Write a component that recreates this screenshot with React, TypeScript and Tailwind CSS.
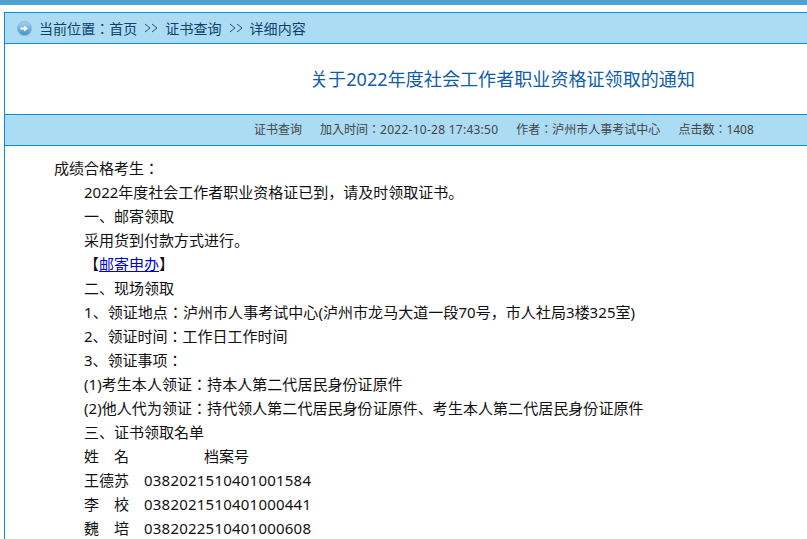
const fontStack = { fontFamily: '"Noto Sans", "Noto Sans CJK JP", sans-serif' };

const rows: [string, string][] = [
  ["王德苏", "0382021510401001584"],
  ["李\u3000校", "0382021510401000441"],
  ["魏\u3000培", "0382022510401000608"],
];

function ArrowDot() {
  return (
    <svg width="15" height="15" viewBox="0 0 15 15" className="shrink-0">
      <defs>
        <linearGradient id="dot" x1="0" y1="0" x2="0" y2="1">
          <stop offset="0" stopColor="#a9d4ee" />
          <stop offset="1" stopColor="#3f8fcf" />
        </linearGradient>
      </defs>
      <circle cx="7.5" cy="7.5" r="7" fill="url(#dot)" stroke="#7fb4dc" strokeWidth="0.8" />
      <path d="M3.5 6.4h3.6V4.4l3.9 3.1-3.9 3.1V8.6H3.5z" fill="#fff" />
    </svg>
  );
}

function Chevrons() {
  return (
    <svg width="14" height="10" viewBox="0 0 14 10" className="mx-[7px] shrink-0" fill="none" stroke="#123f6d" strokeWidth="0.9">
      <path d="M1 1l5 4-5 4M8 1l5 4-5 4" />
    </svg>
  );
}

export default function App() {
  return (
    <div style={fontStack} className="h-[539px] w-[807px] overflow-hidden bg-white">
      <div className="h-[5px] bg-[#4fa3d3]" />
      <div className="mt-[7px] ml-1 w-[850px] border-l border-[#0a8fd6]">
        <div className="flex h-[32px] items-center gap-[7px] border-y border-[#0a8fd6] bg-[#abdcf3] pl-[12px] text-[14px] text-[#123f6d]">
          <ArrowDot />
          <span className="flex items-center tracking-[0.05px]">
            当前位置：首页
            <Chevrons />
            证书查询
            <Chevrons />
            详细内容
          </span>
        </div>

        <div className="flex h-[70px] items-center pl-[305px]">
          <h1 className="text-[18px] font-normal tracking-[0.08px] text-[#0f5cab]">
            关于2022年度社会工作者职业资格证领取的通知
          </h1>
        </div>

        <div className="flex h-[32px] items-center gap-[18px] border-y border-[#0a8fd6] bg-[#abdcf3] pl-[249px] text-[12px] text-[#444]">
          <span>证书查询</span>
          <span>
            加入时间：<span className="tracking-[0.26px]">2022-10-28 17:43:50</span>
          </span>
          <span>作者：泸州市人事考试中心</span>
          <span>点击数：1408</span>
        </div>

        <div className="pt-[10px] pl-[49px] text-[15px] leading-[24px] text-[#111]">
          <p>成绩合格考生：</p>
          <div className="pl-[30px]">
            <p>2022年度社会工作者职业资格证已到，请及时领取证书。</p>
            <p>一、邮寄领取</p>
            <p>采用货到付款方式进行。</p>
            <p>
              【<a href="#" className="text-[#0000cc] underline">邮寄申办</a>】
            </p>
            <p>二、现场领取</p>
            <p className="tracking-[0.05px]">1、领证地点：泸州市人事考试中心(泸州市龙马大道一段70号，市人社局3楼325室)</p>
            <p>2、领证时间：工作日工作时间</p>
            <p>3、领证事项：</p>
            <p className="tracking-[0.05px]">(1)考生本人领证：持本人第二代居民身份证原件</p>
            <p className="tracking-[0.05px]">(2)他人代为领证：持代领人第二代居民身份证原件、考生本人第二代居民身份证原件</p>
            <p>三、证书领取名单</p>
            <p className="flex">
              <span className="w-[120px]">姓{"\u3000"}名</span>
              <span>档案号</span>
            </p>
            {rows.map(([name, no]) => (
              <p key={no} className="flex">
                <span className="w-[60px]">{name}</span>
                <span className="tracking-[0.22px]">{no}</span>
              </p>
            ))}
          </div>
        </div>
      </div>
    </div>
  );
}
